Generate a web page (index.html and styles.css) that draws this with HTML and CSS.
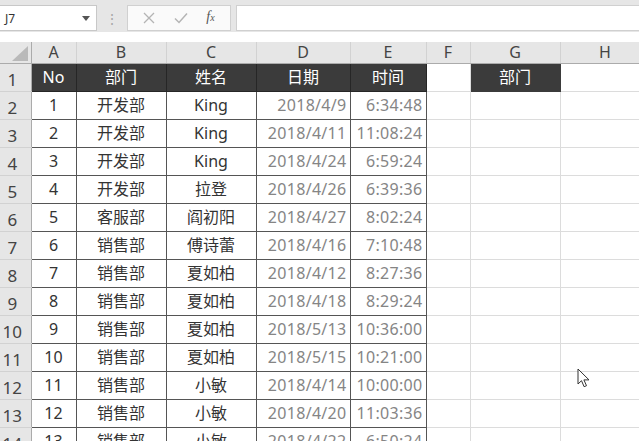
FILE: index.html
```html
<!DOCTYPE html>
<html lang="zh-CN">
<head>
    <meta charset="UTF-8">
    <title>部门表</title>
    <link rel="stylesheet" href="styles.css">
</head>
<body>
    <!-- Name box and formula bar -->
    <div class="formula-bar">
        <div class="name-box">
            <span>J7</span>
            <svg class="caret" width="8" height="5" viewBox="0 0 8 5"><path d="M0 0h8L4 5z" fill="#555"/></svg>
        </div>
        <div class="grip">⋮</div>
        <div class="fx-buttons">
            <svg width="12" height="12" viewBox="0 0 12 12"><path d="M1 1l10 10M11 1L1 11" stroke="#b4b4b4" stroke-width="1.3" fill="none"/></svg>
            <svg width="14" height="12" viewBox="0 0 14 12"><path d="M1 6.5l4 4L13 1.5" stroke="#b4b4b4" stroke-width="1.5" fill="none"/></svg>
            <span class="fx">f<span class="fx-x">x</span></span>
        </div>
        <div class="formula-input"></div>
    </div>

    <!-- Sheet grid -->
    <table class="sheet">
        <colgroup>
            <col style="width:31px">
            <col style="width:45px">
            <col style="width:90px">
            <col style="width:90px">
            <col style="width:94px">
            <col style="width:76px">
            <col style="width:44px">
            <col style="width:90px">
            <col style="width:90px">
        </colgroup>
        <thead>
            <tr class="col-head">
                <th class="corner">
                    <svg width="16" height="15" viewBox="0 0 16 15"><path d="M16 0V15H0z" fill="#b9b9b9"/></svg>
                </th>
                <th>A</th><th>B</th><th>C</th><th>D</th><th>E</th><th>F</th><th>G</th><th>H</th>
            </tr>
        </thead>
        <tbody id="rows">
            <tr>
                <th class="row-head">1</th>
                <td class="dark">No</td>
                <td class="dark">部门</td>
                <td class="dark">姓名</td>
                <td class="dark">日期</td>
                <td class="dark">时间</td>
                <td class="grid"></td>
                <td class="dark dark-solo">部门</td>
                <td class="grid"></td>
            </tr>
        </tbody>
    </table>

    <!-- Mouse pointer -->
    <svg class="pointer" width="13" height="20" viewBox="0 0 13 20">
        <path d="M1 1v15l3.5-3.3 2.6 6 2.4-1-2.6-5.8H12z" fill="#fff" stroke="#333" stroke-width="1"/>
    </svg>

    <script>
        var data = [
            [1, '开发部', 'King', '2018/4/9', '6:34:48'],
            [2, '开发部', 'King', '2018/4/11', '11:08:24'],
            [3, '开发部', 'King', '2018/4/24', '6:59:24'],
            [4, '开发部', '拉登', '2018/4/26', '6:39:36'],
            [5, '客服部', '阎初阳', '2018/4/27', '8:02:24'],
            [6, '销售部', '傅诗蕾', '2018/4/16', '7:10:48'],
            [7, '销售部', '夏如柏', '2018/4/12', '8:27:36'],
            [8, '销售部', '夏如柏', '2018/4/18', '8:29:24'],
            [9, '销售部', '夏如柏', '2018/5/13', '10:36:00'],
            [10, '销售部', '夏如柏', '2018/5/15', '10:21:00'],
            [11, '销售部', '小敏', '2018/4/14', '10:00:00'],
            [12, '销售部', '小敏', '2018/4/20', '11:03:36'],
            [13, '销售部', '小敏', '2018/4/22', '6:50:24']
        ];

        var tbody = document.getElementById('rows');
        data.forEach(function(r, i) {
            var tr = document.createElement('tr');
            tr.innerHTML =
                '<th class="row-head">' + (i + 2) + '</th>' +
                '<td class="cell">' + r[0] + '</td>' +
                '<td class="cell">' + r[1] + '</td>' +
                '<td class="cell">' + r[2] + '</td>' +
                '<td class="cell num">' + r[3] + '</td>' +
                '<td class="cell num">' + r[4] + '</td>' +
                '<td class="grid"></td>' +
                '<td class="grid"></td>' +
                '<td class="grid"></td>';
            tbody.appendChild(tr);
        });
    </script>
</body>
</html>
```

FILE: styles.css
```css
body {
    margin: 0;
    background-color: #fff;
    font-family: 'Noto Sans', 'Noto Sans CJK SC', sans-serif;
    overflow: hidden;
    width: 639px;
    height: 441px;
    position: relative;
}

/* Top bar */
.formula-bar {
    display: flex;
    align-items: center;
    height: 26px;
    padding: 5px 0 1px;
    background-color: #e6e6e6;
}

.name-box {
    box-sizing: border-box;
    width: 97px;
    height: 26px;
    background-color: #fff;
    border: 1px solid #c8c8c8;
    border-left: none;
    display: flex;
    align-items: center;
    justify-content: space-between;
    padding: 0 6px 0 5px;
    font-size: 12px;
    color: #333;
}

.caret {
    margin-top: 1px;
}

.grip {
    width: 30px;
    text-align: center;
    color: #a8a8a8;
    font-size: 14px;
}

.fx-buttons {
    box-sizing: border-box;
    width: 104px;
    height: 26px;
    background-color: #fafafa;
    border: 1px solid #d0d0d0;
    display: flex;
    align-items: center;
    justify-content: space-around;
    padding: 0 6px 0 6px;
}

.fx {
    font-family: 'Liberation Serif', serif;
    font-style: italic;
    font-size: 14px;
    color: #555;
    margin-top: -2px;
}

.fx-x {
    font-size: 10px;
}

.formula-input {
    box-sizing: border-box;
    flex: 1;
    height: 26px;
    margin-left: 5px;
    background-color: #fff;
    border: 1px solid #d0d0d0;
    border-right: none;
}

/* Grid */
.sheet {
    margin-top: 10px;
    border-collapse: collapse;
    table-layout: fixed;
    width: 650px;
}

.sheet tr {
    height: 28px;
}

.sheet tr.col-head {
    height: 21px;
}

.col-head th {
    padding: 0;
    background-color: #e6e6e6;
    border-right: 1px solid #d2d2d2;
    border-bottom: 1px solid #ababab;
    font-weight: normal;
    font-size: 16px;
    color: #444;
    line-height: 18px;
}

.col-head .corner {
    text-align: right;
    vertical-align: bottom;
    padding: 0 3px 2px 0;
    border-right-color: #ababab;
}

.corner svg {
    display: block;
    margin-left: auto;
}

.row-head {
    padding: 0 6px 0 0;
    background-color: #e6e6e6;
    border-right: 1px solid #ababab;
    border-bottom: 1px solid #d2d2d2;
    font-weight: normal;
    font-size: 17px;
    color: #444;
    text-align: center;
    vertical-align: bottom;
    line-height: 22px;
}

td {
    padding: 0;
    font-size: 16px;
    line-height: 20px;
    text-align: center;
    white-space: nowrap;
}

.dark {
    background-color: #3b3b3b;
    color: #fff;
    border: 1px solid #262626;
}

.dark-solo {
    border-color: #3b3b3b;
}

.cell {
    color: #333;
    border: 1px solid #555;
}

.cell.num {
    text-align: right;
    padding-right: 3px;
    color: #858585;
    letter-spacing: 0.3px;
}

.grid {
    border-right: 1px solid #dcdcdc;
    border-bottom: 1px solid #dcdcdc;
}

.pointer {
    position: absolute;
    left: 577px;
    top: 368px;
}
```
